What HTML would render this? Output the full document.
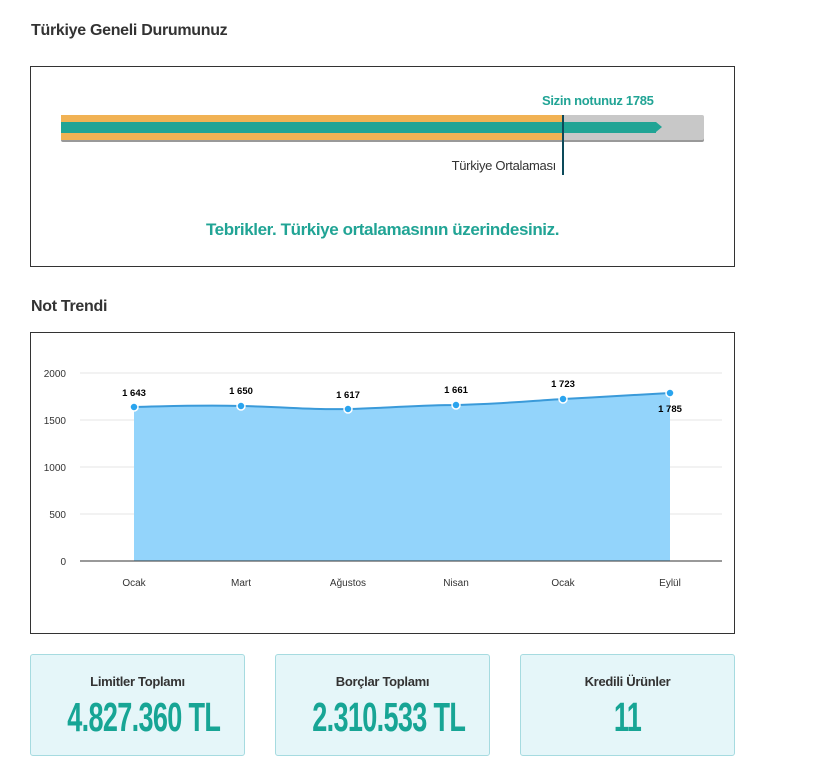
<!DOCTYPE html>
<html><head><meta charset="utf-8"><style>
body{margin:0;background:#fff;font-family:"Liberation Sans",sans-serif;width:840px;height:769px;position:relative;overflow:hidden}
.h{position:absolute;left:31px;font-weight:bold;font-size:16px;color:#333;letter-spacing:-0.3px}
.box{position:absolute;left:30px;width:705px;border:1px solid #333;box-sizing:border-box}
.card{position:absolute;top:654px;width:215px;height:102px;background:#e5f6f9;border:1px solid #a6dbe0;border-radius:3px;box-sizing:border-box;text-align:center}
.card .t{margin-top:19px;font-weight:bold;font-size:13px;color:#333;letter-spacing:-0.3px}
.card .v{margin-top:5px;font-weight:bold;font-size:41px;color:#17a595;transform:scaleX(0.66);white-space:nowrap;letter-spacing:-1px}
</style></head><body>
<div class="h" style="top:22px">Türkiye Geneli Durumunuz</div>
<div class="box" style="top:66px;height:201px">
 <div style="position:absolute;left:30px;top:48px;width:643px;height:25px;background:#c8c8c8;border-radius:2px;box-shadow:0 2px 0 #999"></div>
 <div style="position:absolute;left:30px;top:48px;width:502px;height:25px;background:#f1b254"></div>
 <div style="position:absolute;left:30px;top:55px;width:595px;height:11px;background:#21a495"></div>
 <div style="position:absolute;left:625px;top:55px;width:0;height:0;border-left:6px solid #21a495;border-top:5.5px solid transparent;border-bottom:5.5px solid transparent"></div>
 <div style="position:absolute;left:531px;top:48px;width:2px;height:60px;background:#0c4a5a"></div>
 <div style="position:absolute;left:511px;top:26px;font-weight:bold;font-size:13px;color:#21a495;letter-spacing:-0.3px">Sizin notunuz 1785</div>
 <div style="position:absolute;right:178px;top:91px;font-size:13px;color:#333;letter-spacing:-0.3px">Türkiye Ortalaması</div>
 <div style="position:absolute;left:0;right:0;top:153px;text-align:center;font-weight:bold;font-size:17px;color:#21a495;letter-spacing:-0.4px">Tebrikler. Türkiye ortalamasının üzerindesiniz.</div>
</div>
<div class="h" style="top:298px">Not Trendi</div>
<div class="box" style="top:332px;height:302px"></div>
<svg style="position:absolute;left:0;top:0" width="840" height="769" font-family="Liberation Sans,sans-serif" font-size="10">
 <g stroke="#e6e6e6"><line x1="80" x2="722" y1="373" y2="373"/><line x1="80" x2="722" y1="420" y2="420"/><line x1="80" x2="722" y1="467" y2="467"/><line x1="80" x2="722" y1="514" y2="514"/></g>
 <path d="M134 407 C180 406 200 405 241 406 C290 407 310 410 348 409 C390 408 420 405 456 405 C500 404 530 401 563 399 C600 397 640 395 670 393 L670 561 L134 561Z" fill="#93d4fb"/>
 <path d="M134 407 C180 406 200 405 241 406 C290 407 310 410 348 409 C390 408 420 405 456 405 C500 404 530 401 563 399 C600 397 640 395 670 393" fill="none" stroke="#3a9ad9" stroke-width="2"/>
 <line x1="80" x2="722" y1="561" y2="561" stroke="#333"/>
 <g fill="#2aa4ee" stroke="#fff" stroke-width="1.5"><circle cx="134" cy="407" r="4"/><circle cx="241" cy="406" r="4"/><circle cx="348" cy="409" r="4"/><circle cx="456" cy="405" r="4"/><circle cx="563" cy="399" r="4"/><circle cx="670" cy="393" r="4"/></g>
 <g fill="#333" text-anchor="end"><text x="66" y="377">2000</text><text x="66" y="424">1500</text><text x="66" y="471">1000</text><text x="66" y="518">500</text><text x="66" y="565">0</text></g>
 <g fill="#000" font-weight="bold" font-size="9.5" text-anchor="middle"><text x="134" y="396">1 643</text><text x="241" y="394">1 650</text><text x="348" y="398">1 617</text><text x="456" y="393">1 661</text><text x="563" y="387">1 723</text><text x="670" y="412">1 785</text></g>
 <g fill="#333" text-anchor="middle"><text x="134" y="586">Ocak</text><text x="241" y="586">Mart</text><text x="348" y="586">Ağustos</text><text x="456" y="586">Nisan</text><text x="563" y="586">Ocak</text><text x="670" y="586">Eylül</text></g>
</svg>
<div class="card" style="left:30px"><div class="t">Limitler Toplamı</div><div class="v">4.827.360 TL</div></div>
<div class="card" style="left:275px"><div class="t">Borçlar Toplamı</div><div class="v">2.310.533 TL</div></div>
<div class="card" style="left:520px"><div class="t">Kredili Ürünler</div><div class="v">11</div></div>
</body></html>
